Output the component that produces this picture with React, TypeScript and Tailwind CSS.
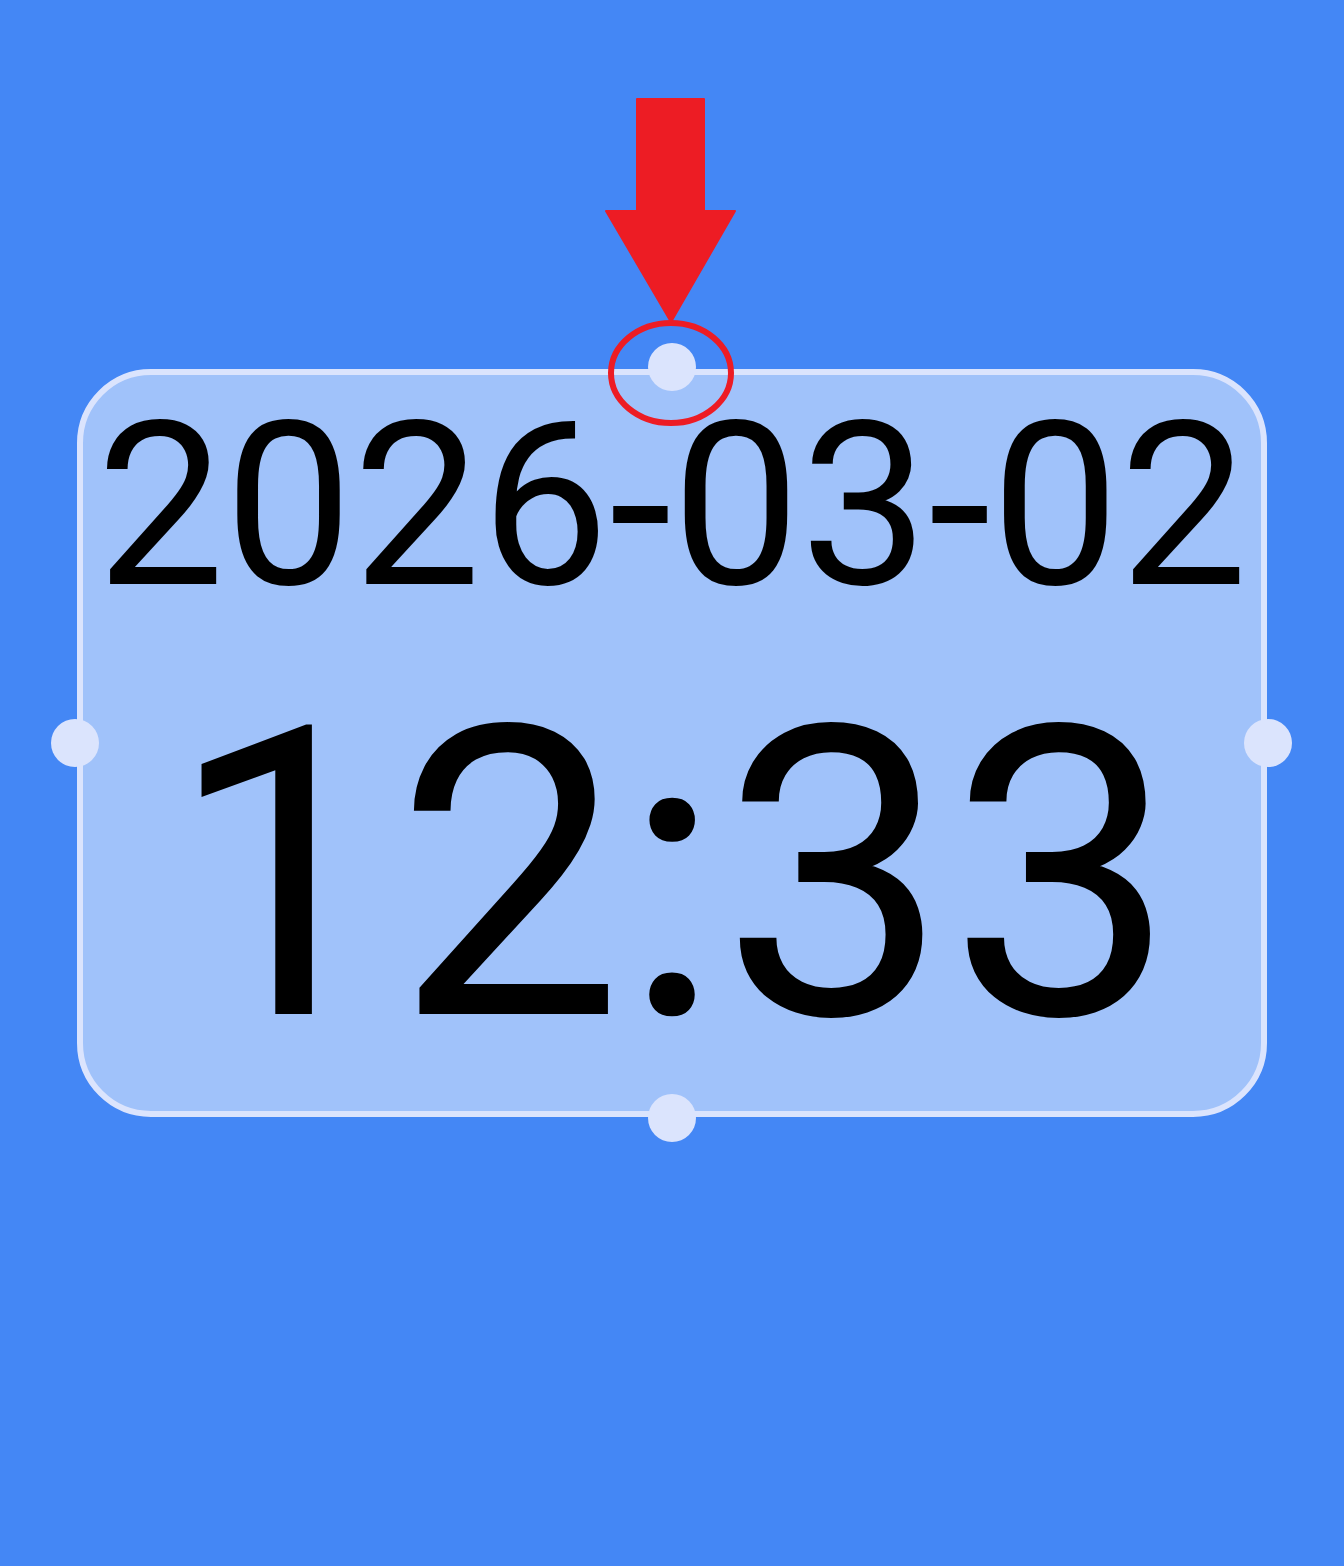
import React from 'react';

const Handle = ({ className }: { className: string }) => (
  <div className={`absolute w-[48px] h-[48px] rounded-full bg-[#dbe4fd] ${className}`} />
);

const App = () => {
  return (
    <div className="relative w-[1344px] h-[1566px] bg-[#4487f5] overflow-hidden" style={{ fontFamily: 'Roboto, "Noto Sans", sans-serif' }}>
      <div className="pt-[369px] flex justify-center">
        {/* widget being resized */}
        <div className="relative w-[1190px] h-[748px] rounded-[74px] border-[6px] border-[#dbe4fd] bg-[#a0c2fa]">
          <div className="flex flex-col items-center pt-[17px] text-black">
            <div className="text-[228px] leading-none">2026-03-02</div>
            <div className="mt-[53px] text-[405px] leading-none">12:33</div>
          </div>
          <Handle className="left-1/2 top-[-32px] -translate-x-1/2" />
          <Handle className="left-1/2 bottom-[-31px] -translate-x-1/2" />
          <Handle className="left-[-32px] top-1/2 -translate-y-1/2" />
          <Handle className="right-[-31px] top-1/2 -translate-y-1/2" />
        </div>
      </div>

      {/* annotation */}
      <svg className="absolute left-0 top-0" width="1344" height="440" viewBox="0 0 1344 440">
        <path d="M637 99 H704 V211 H735 L671 322 L606 211 H637 Z" fill="#ed1c24" stroke="#ed1c24" strokeWidth="2" strokeLinejoin="round" />
        <ellipse cx="671" cy="373" rx="60" ry="50" fill="none" stroke="#ed1c24" strokeWidth="6" />
      </svg>
    </div>
  );
};

export default App;
